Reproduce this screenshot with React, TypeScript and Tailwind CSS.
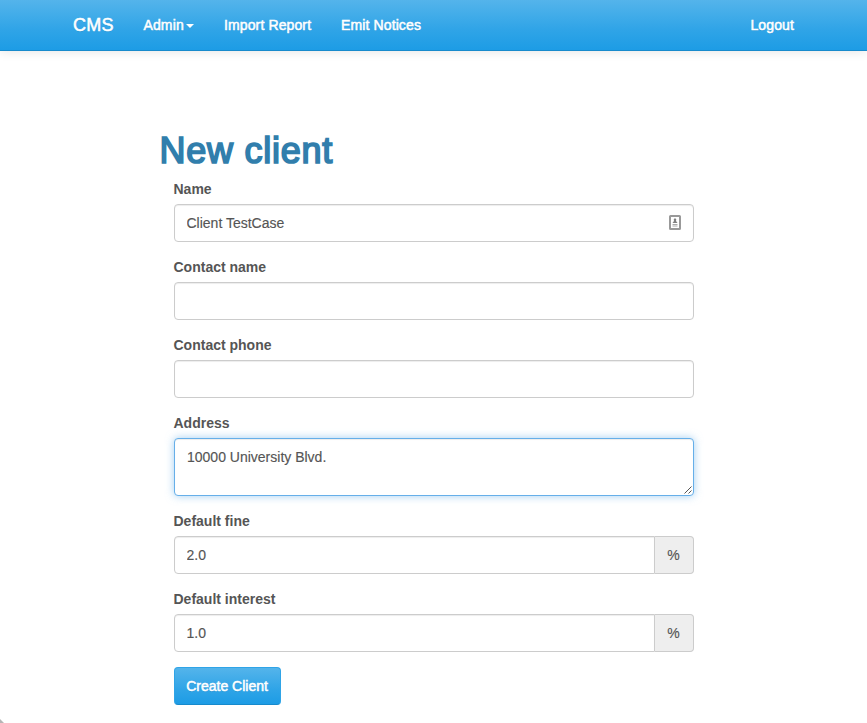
import type { ReactNode } from 'react';

const control =
  'block w-full rounded border border-[#ccc] bg-white px-[11.5px] py-[8px] text-[14px] leading-[20px] text-[#555] shadow-[inset_0_1px_1px_rgba(0,0,0,0.075)] outline-none [-webkit-text-stroke:0.15px_#555]';

const navLink =
  'text-[14px] leading-[20px] tracking-[0.12px] text-white [-webkit-text-stroke:0.5px_white] [text-shadow:0_1px_0_rgba(0,0,0,0.1)] whitespace-nowrap';

function Field({ label, children }: { label: string; children: ReactNode }) {
  return (
    <div className="mb-[15px]">
      <label className="mb-[5px] block text-[14px] leading-[20px] font-bold text-[#555]">
        <span className="-ml-[0.5px]">{label}</span>
      </label>
      {children}
    </div>
  );
}

function PercentInput({ value }: { value: string }) {
  return (
    <div className="flex h-[38px]">
      <input className={`${control} min-w-0 flex-1 rounded-r-none`} defaultValue={value} />
      <span className="flex w-[39px] items-center justify-center rounded-r border border-l-0 border-[#ccc] bg-[#eee] pr-px text-[14px] text-[#555] [-webkit-text-stroke:0.15px_#555]">
        %
      </span>
    </div>
  );
}

function ContactIcon() {
  return (
    <svg width="12" height="15" viewBox="0 0 12 15" fill="none">
      <rect x="1" y="1" width="10" height="13" rx="0.5" stroke="#999" strokeWidth="2" />
      <path d="M6 3 L7.3 4.5 L7 6 L8.5 8 H3.5 L5 6 L4.7 4.5 Z" fill="#808080" />
      <path d="M3.5 9.5 H8.5 M3.5 11 H8.5" stroke="#aaa" strokeWidth="1" />
    </svg>
  );
}

export default function App() {
  return (
    <div className="relative h-[723px] w-[867px] overflow-hidden bg-white font-['Liberation_Sans',Arial,sans-serif] text-[#555]">
      <nav className="flex h-[51px] items-center border-b border-[#178acc] bg-[linear-gradient(#54b4eb,#2fa4e7_60%,#1d9ce5)] pr-[73px] pl-[73px] shadow-[0_1px_10px_rgba(0,0,0,0.1)]">
        <a className="mr-[29px] w-[41px] text-[18px] leading-[20px] tracking-[0.2px] whitespace-nowrap text-white [-webkit-text-stroke:0.5px_white] [text-shadow:0_1px_0_rgba(0,0,0,0.1)]">
          CMS
        </a>
        <a className={`${navLink} flex w-[81px] items-center pl-[0.5px]`}>
          Admin
          <span className="mt-px ml-[2px] border-x-4 border-t-4 border-x-transparent border-t-white" />
        </a>
        <a className={`${navLink} w-[117px]`}>Import Report</a>
        <a className={navLink}>Emit Notices</a>
        <a className={`${navLink} ml-auto`}>Logout</a>
      </nav>

      <main className="ml-[159px] w-[550px] pt-[80px]">
        <h1 className="h-[48px] pl-[0.5px] text-[36px] leading-[40px] tracking-[0.75px] text-[#317eac] [-webkit-text-stroke:1.7px_#317eac]">
          New client
        </h1>
        <form className="px-[15px]">
          <Field label="Name">
            <div className="relative">
              <input className={control} defaultValue="Client TestCase" />
              <span className="absolute top-[11px] right-[13px]">
                <ContactIcon />
              </span>
            </div>
          </Field>
          <Field label="Contact name">
            <input className={control} />
          </Field>
          <Field label="Contact phone">
            <input className={control} />
          </Field>
          <Field label="Address">
            <div className="relative">
              <textarea
                className="block h-[58px] w-full resize-none rounded border border-[#66afe9] bg-white px-[12px] py-[8px] text-[14px] leading-[20px] text-[#555] shadow-[inset_0_1px_1px_rgba(0,0,0,0.075),0_0_8px_rgba(102,175,233,0.6)] outline-none [-webkit-text-stroke:0.15px_#555]"
                defaultValue="10000 University Blvd."
              />
              <svg className="absolute right-[2px] bottom-[2px]" width="8" height="8" viewBox="0 0 8 8">
                <path d="M0.5 7.5 L7.5 0.5 M4.5 7.5 L7.5 4.5" stroke="#555" strokeWidth="1" />
              </svg>
            </div>
          </Field>
          <Field label="Default fine">
            <PercentInput value="2.0" />
          </Field>
          <Field label="Default interest">
            <PercentInput value="1.0" />
          </Field>
          <button
            type="button"
            className="block h-[38px] w-[107px] rounded border border-[#2fa4e7] border-b-[#178acc] bg-[linear-gradient(#54b4eb,#2fa4e7_60%,#1d9ce5)] pr-px text-[14px] leading-[20px] whitespace-nowrap text-white [-webkit-text-stroke:0.5px_white] [text-shadow:0_1px_0_rgba(0,0,0,0.1)]"
          >
            Create Client
          </button>
        </form>
      </main>
      <svg className="absolute bottom-0 left-0" width="4" height="4" viewBox="0 0 4 4">
        <path d="M0 0 L4 4 H0 Z" fill="#b5b5b5" />
      </svg>
    </div>
  );
}
